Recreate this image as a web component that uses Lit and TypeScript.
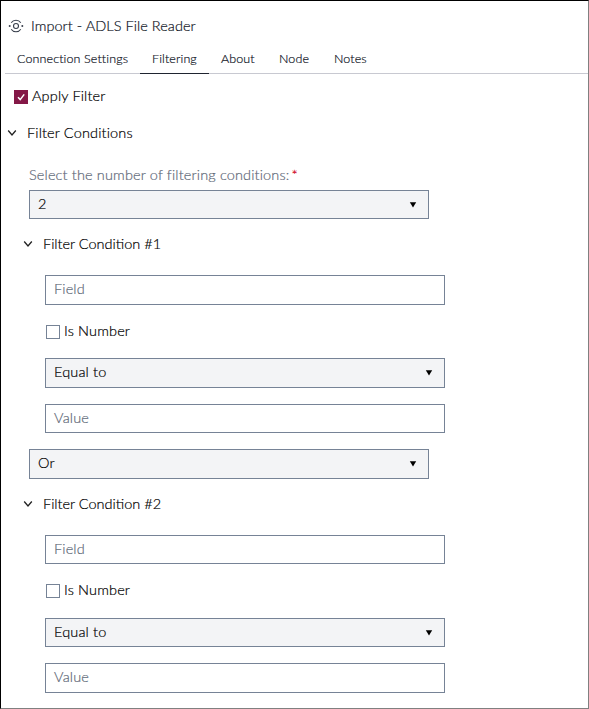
import { LitElement, html, css, svg } from "lit";
import { customElement, property } from "lit/decorators.js";

const chevron = html`<svg class="chevron" width="10" height="8" viewBox="0 0 10 8">
  ${svg`<path d="M1.2 1.5 L5 6 L8.8 1.5" fill="none" stroke="#222" stroke-width="1.3"/>`}
</svg>`;

@customElement("drop-down")
class DropDown extends LitElement {
  @property() value = "";
  static styles = css`
    :host {
      display: flex;
      box-sizing: border-box;
      width: 400px;
      border: 1px solid #768396;
      background: #f3f4f6;
      color: #000;
      padding: 0 11px 0 8px;
      justify-content: space-between;
    }
    .value { line-height: 25px; white-space: nowrap; }
    .arrow { margin-top: 11px; }
  `;
  render() {
    return html`<span class="value">${this.value}</span>
      <svg class="arrow" width="8" height="6" viewBox="0 0 8 6">
        <path d="M1 0.3H7.4L4.2 5.4Z" transform="translate(-0.2 0)" fill="#000" />
      </svg>`;
  }
}

@customElement("text-field")
class TextField extends LitElement {
  @property() placeholder = "";
  static styles = css`
    :host {
      display: block;
      box-sizing: border-box;
      width: 400px;
      border: 1px solid #768396;
      background: #fff;
      color: #5f6a79;
      padding: 0 8px;
      line-height: 25px;
    }
  `;
  render() {
    return html`${this.placeholder}`;
  }
}

@customElement("app-root")
class AppRoot extends LitElement {
  static styles = css`
    :host {
      display: block;
      box-sizing: border-box;
      width: 589px;
      height: 709px;
      overflow: hidden;
      background: #fff;
      border: 1px solid #000;
      border-right-color: #808080;
      border-bottom-color: #808080;
      font: 300 14.5px/20px Lato, "Liberation Sans", sans-serif;
      letter-spacing: 0.15px;
      -webkit-text-stroke: 0.2px currentColor;
      color: #000;
      white-space: nowrap;
    }
    .title {
      display: flex;
      align-items: center;
      height: 20px;
      margin: 15px 0 0 7px;
      gap: 7px;
      color: #10151f;
      letter-spacing: 0.05px;
    }
    .title svg { flex: none; }
    .tabs {
      display: flex;
      height: 37px;
      margin: 1px 0 0 4px;
      box-shadow: inset 0 -1px #c8c9d1;
      font-size: 12.5px;
      line-height: 44px;
      letter-spacing: 0.12px;
      color: #10151f;
    }
    .tab { padding: 0 12px; box-sizing: border-box; }
    .tab.active { box-shadow: inset 0 -1px #1f2430; }
    .t0 { width: 135px; }
    .t1 { width: 69px; }
    .t2 { width: 58px; }
    .t3 { width: 55px; }
    .check { display: flex; gap: 4px; height: 20px; align-items: center; }
    .check .text { line-height: 18px; height: 20px; }
    .apply .text { line-height: 20px; }
    .box {
      box-sizing: border-box;
      width: 14px;
      height: 14px;
      border: 1px solid #768396;
      display: block;
    }
    .box.on { background: #841847; border-color: #841847; }
    .box svg { display: block; }
    .apply { margin: 13px 0 0 13px; }
    .apply .text { line-height: 18px; }
    .head { display: flex; align-items: center; height: 20px; }
    .main { margin: 16px 0 0 6px; gap: 10px; }
    .label { margin: 22px 0 0 28px; height: 20px; color: #5f6a79; }
    .star { color: #d0021b; margin-left: 2px; }
    .count { margin: 5px 0 0 28px; height: 29px; }
    .sub { margin: 15px 0 0 22px; gap: 10px; letter-spacing: 0; }
    .cond { margin-left: 44px; display: flex; flex-direction: column; }
    .cond .check { margin-left: 1px; }
    .c1 { margin-top: 21px; }
    .h30 { height: 30px; }
    .h29 { height: 29px; }
    .c1 .check { margin-top: 17px; }
    .c1 .op { margin-top: 16px; }
    .c1 .val { margin-top: 16px; }
    .join { margin: 16px 0 0 28px; }
    .c2 { margin-top: 21px; }
    .c2 .check { margin-top: 17px; }
    .c2 .op { margin-top: 17px; }
    .c2 .val { margin-top: 16px; }
  `;

  private condition(n: number, sizes: string[]) {
    return html`
      <div class="head sub">${chevron}<span>Filter Condition #${n}</span></div>
      <div class="cond c${n}">
        <text-field class=${sizes[0]} placeholder="Field"></text-field>
        <div class="check"><span class="box"></span><span class="text">Is Number</span></div>
        <drop-down class="op ${sizes[1]}" value="Equal to"></drop-down>
        <text-field class="val ${sizes[2]}" placeholder="Value"></text-field>
      </div>
    `;
  }

  render() {
    const tabs = ["Connection Settings", "Filtering", "About", "Node", "Notes"];
    return html`
      <div class="title">
        <svg width="16" height="14" viewBox="0 0 16 14" fill="none" stroke="#39404d" stroke-width="1.1">
          <circle cx="8" cy="7" r="2.5" />
          <path d="M3.2 3.8A5.8 5.8 0 0 1 12.8 3.8M3.2 10.2A5.8 5.8 0 0 0 12.8 10.2" />
          <circle cx="1.7" cy="7" r="1" fill="#39404d" stroke="none" />
          <circle cx="14.3" cy="7" r="1" fill="#39404d" stroke="none" />
        </svg>
        <span>Import - ADLS File Reader</span>
      </div>
      <div class="tabs">
        ${tabs.map((t, i) => html`<div class="tab t${i} ${i === 1 ? "active" : ""}">${t}</div>`)}
      </div>
      <div class="check apply">
        <span class="box on"><svg width="12" height="12" viewBox="0 0 12 12"><path d="M3 6.2L5.2 8.6L9.2 3.4" fill="none" stroke="#fff" stroke-width="1.5" /></svg></span>
        <span class="text">Apply Filter</span>
      </div>
      <div class="head main">${chevron}<span>Filter Conditions</span></div>
      <div class="label">Select the number of filtering conditions:<span class="star">*</span></div>
      <drop-down class="count" value="2"></drop-down>
      ${this.condition(1, ["h30", "h30", "h29"])}
      <drop-down class="join h30" value="Or"></drop-down>
      ${this.condition(2, ["h29", "h29", "h30"])}
    `;
  }
}
